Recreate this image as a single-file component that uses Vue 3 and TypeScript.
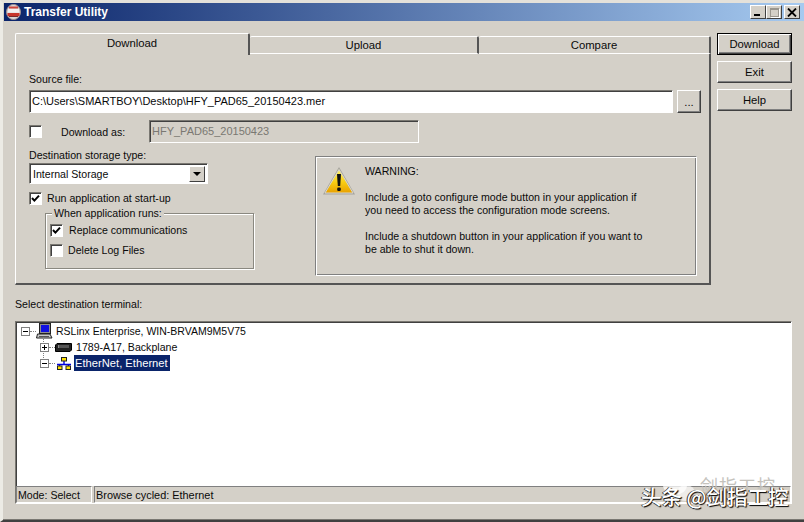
<script setup lang="ts">
const warningLines: string[] = [
  'Include a goto configure mode button in your application if',
  'you need to access the configuration mode screens.',
]
const warningLines2: string[] = [
  'Include a shutdown button in your application if you want to',
  'be able to shut it down.',
]
</script>

<template>
  <div class="window">
    <span class="edge-strip"></span>
    <div class="titlebar">
      <svg class="appicon" width="15" height="16" viewBox="0 0 15 16">
        <ellipse cx="7.5" cy="8" rx="7" ry="7.6" fill="#dcd6d6" stroke="#a09090" />
        <rect x="3" y="2.5" width="9" height="2" fill="#d0453b" />
        <rect x="2" y="5" width="11" height="3.5" fill="#f4f0f0" />
        <rect x="1.5" y="9" width="12" height="3" fill="#c8352b" />
        <rect x="3" y="12" width="9" height="1" fill="#7a2a2a" />
      </svg>
      <span class="title">Transfer Utility</span>
      <div class="caption-btns">
        <div class="cap"><span class="min"></span></div>
        <div class="cap cap-dis"><span class="max"></span></div>
        <div class="cap cap-close">
          <svg width="10" height="9" viewBox="0 0 10 9"><path d="M1 0.5 L9 8.5 M9 0.5 L1 8.5" stroke="#000" stroke-width="1.8" fill="none" /></svg>
        </div>
      </div>
    </div>

    <div class="content">
      <div class="top">
        <div class="tabs">
          <div class="tabstrip">
            <div class="tab tab-active">Download</div>
            <div class="tab tab-2">Upload</div>
            <div class="tab tab-3">Compare</div>
          </div>
          <div class="pane">
            <div class="lbl src-label">Source file:</div>
            <div class="src-row">
              <div class="input">C:\Users\SMARTBOY\Desktop\HFY_PAD65_20150423.mer</div>
              <div class="btn dots">...</div>
            </div>
            <div class="as-row">
              <span class="check"></span>
              <span class="as-label">Download as:</span>
              <div class="input input-dis">HFY_PAD65_20150423</div>
            </div>
            <div class="lower">
              <div class="lower-left">
                <div class="lbl">Destination storage type:</div>
                <div class="combo">
                  <span class="combo-text">Internal Storage</span>
                  <span class="combo-btn"><i></i></span>
                </div>
                <label class="check-row run-row">
                  <span class="check">
                    <svg width="9" height="9" viewBox="0 0 9 9"><path d="M1 4 L3.4 6.6 L8 1.6" stroke="#000" stroke-width="2" fill="none" /></svg>
                  </span>
                  Run application at start-up
                </label>
                <div class="group">
                  <span class="legend">When application runs:</span>
                  <label class="check-row">
                    <span class="check">
                      <svg width="9" height="9" viewBox="0 0 9 9"><path d="M1 4 L3.4 6.6 L8 1.6" stroke="#000" stroke-width="2" fill="none" /></svg>
                    </span>
                    Replace communications
                  </label>
                  <label class="check-row second">
                    <span class="check"></span>
                    Delete Log Files
                  </label>
                </div>
              </div>
              <div class="warning">
                <svg class="warn-icon" width="34" height="30" viewBox="0 0 34 30">
                  <defs>
                    <linearGradient id="wg" x1="0" y1="0" x2="0" y2="1">
                      <stop offset="0" stop-color="#fff36a" />
                      <stop offset="0.55" stop-color="#f8cc12" />
                      <stop offset="1" stop-color="#e8a000" />
                    </linearGradient>
                  </defs>
                  <path d="M17 1 L33 28.5 H1 Z" fill="#a5a39c" />
                  <path d="M17 3.5 L31 27 H3 Z" fill="url(#wg)" stroke="#d8d6cf" stroke-width="1" />
                  <path d="M15 8 H19 L18.2 20 H15.8 Z" fill="#111" />
                  <rect x="15.2" y="21.5" width="3.6" height="3.4" rx="1.2" fill="#111" />
                </svg>
                <div class="warn-text">
                  <p class="warn-head">WARNING:</p>
                  <p><template v-for="(l, i) in warningLines" :key="i">{{ l }}<br /></template></p>
                  <p><template v-for="(l, i) in warningLines2" :key="i">{{ l }}<br /></template></p>
                </div>
              </div>
            </div>
          </div>
        </div>
        <div class="side">
          <div class="btn side-btn default">Download</div>
          <div class="btn side-btn">Exit</div>
          <div class="btn side-btn">Help</div>
        </div>
      </div>

      <div class="lbl select-label">Select destination terminal:</div>

      <div class="treebox">
        <div class="tree">
          <div class="node">
            <span class="exp"></span><span class="dots-h"></span>
            <svg class="nicon" width="17" height="17" viewBox="0 0 17 17">
              <rect x="3.5" y="0.5" width="11" height="10" fill="#8d8d8d" stroke="#222" />
              <rect x="5" y="2" width="8" height="7" fill="#1010e0" />
              <path d="M1.5 11 H14 L16 15 H0.5 Z" fill="#c8c8c8" stroke="#222" />
              <rect x="3" y="13" width="10" height="1" fill="#555" />
            </svg>
            <span class="ntext t1">RSLinx Enterprise, WIN-BRVAM9M5V75</span>
          </div>
          <div class="node child">
            <span class="exp plus"></span><span class="dots-h"></span>
            <svg class="nicon" width="17" height="9" viewBox="0 0 17 9">
              <path d="M2 0.5 H16.5 V7 L15 8.5 H0.5 V2 Z" fill="#222" stroke="#000" />
              <rect x="3" y="2" width="11" height="3" fill="#8a8a8a" />
              <path d="M5 2 V5 M7 2 V5 M9 2 V5 M11 2 V5 M13 2 V5" stroke="#222" />
            </svg>
            <span class="ntext t2">1789-A17, Backplane</span>
          </div>
          <div class="node child">
            <span class="exp"></span><span class="dots-h"></span>
            <svg class="nicon net" width="14" height="13" viewBox="0 0 14 13">
              <path d="M7 4 V7 M0 7.5 H14 M2.5 7 V9 M11.5 7 V9" stroke="#0000e0" stroke-width="1.4" fill="none" />
              <rect x="4.5" y="0.5" width="5" height="3.5" fill="#ffe000" stroke="#222" />
              <rect x="0.5" y="9" width="4.5" height="3.5" fill="#ffe000" stroke="#222" />
              <rect x="9" y="9" width="4.5" height="3.5" fill="#ffe000" stroke="#222" />
            </svg>
            <span class="ntext selected">EtherNet, Ethernet</span>
          </div>
          <span class="vline"></span>
        </div>
        <div class="status">
          <div class="st st1">Mode: Select</div>
          <div class="st st2">Browse cycled: Ethernet</div>
        </div>
      </div>
    </div>

    <div class="watermark">
      <svg class="wm-icon" width="34" height="32" viewBox="0 0 34 32">
        <ellipse cx="13" cy="12" rx="12" ry="10" fill="#fff" opacity="0.75" />
        <ellipse cx="24" cy="20" rx="9" ry="8" fill="#fff" opacity="0.6" />
      </svg>
      <span class="wm-back">剑指工控</span>
      <span class="wm-front">头条 @剑指工控</span>
    </div>
  </div>
</template>

<style>
html, body { margin: 0; padding: 0; background: #d4d0c8; overflow: hidden; }
</style>

<style scoped>
.window {
  position: relative;
  width: 804px;
  height: 522px;
  box-sizing: border-box;
  background: #d4d0c8;
  border-top: 3px solid #e4e1da;
  border-left: 3px solid #ecebe5;
  border-bottom: 2px solid #404040;
  box-shadow: inset 0 -1px 0 #7a7872;
  font-family: "Liberation Sans", Arial, sans-serif;
  font-size: 10.6px;
  color: #0a0a0a;
  overflow: hidden;
}
.edge-strip {
  position: absolute;
  left: -3px;
  top: 29px;
  width: 2px;
  height: 38px;
  background: linear-gradient(180deg, #b0aea8 0 8px, #d05a50 8px 11px, #c8c6c0 11px 24px, #4a4a4a 24px 38px);
}
.titlebar {
  height: 18px;
  margin-left: 1px;
  display: flex;
  align-items: center;
  background: linear-gradient(90deg, #0a246a 0%, #a6caf0 100%);
}
.appicon { margin-left: 2px; flex: none; }
.title {
  margin-left: 3px;
  color: #fff;
  font-weight: 700;
  font-size: 12px;
}
.caption-btns { margin-left: auto; margin-right: 4px; display: flex; }
.cap {
  width: 16px;
  height: 14px;
  box-sizing: border-box;
  background: #d4d0c8;
  border: 1px solid;
  border-color: #fff #404040 #404040 #fff;
  position: relative;
  display: flex;
  align-items: center;
  justify-content: center;
}
.cap-close { margin-left: 2px; }
.min { position: absolute; left: 3px; bottom: 2px; width: 6px; height: 2px; background: #000; }
.max { width: 9px; height: 9px; box-sizing: border-box; border: 1px solid #9a968e; border-top-width: 2px; box-shadow: 1px 1px 0 #fff; }

.content { padding: 12px 12px 0 12px; }
.top { display: flex; align-items: flex-start; }
.tabs { width: 696px; flex: none; }
.tabstrip { display: flex; height: 21px; align-items: flex-end; position: relative; z-index: 1; }
.tab {
  box-sizing: border-box;
  height: 18px;
  text-align: center;
  line-height: 17px;
  font-size: 11.3px;
  border-top: 1px solid #fff;
  border-left: 1px solid #fff;
  border-right: 2px solid #555;
  border-bottom: 1px solid #fff;
  border-top-left-radius: 2px;
  border-top-right-radius: 2px;
}
.tab-active {
  width: 235px;
  line-height: 19px;
  border-bottom: none;
  background: #d4d0c8;
  margin-bottom: -1px;
  height: 22px;
}
.tab-2 { width: 229px; border-left: none; }
.tab-3 { width: 232px; border-left: none; }
.pane {
  box-sizing: border-box;
  height: 231px;
  border-left: 1px solid #fff;
  border-right: 2px solid #555;
  border-bottom: 2px solid #555;
  padding: 0 7px 0 13px;
}
.lbl { line-height: 14px; }
.src-label { padding-top: 18px; }
.src-row { display: flex; margin-top: 4px; align-items: flex-start; }
.input {
  box-sizing: border-box;
  background: #fff;
  border: 1px solid;
  border-color: #7a7872 #fff #fff #7a7872;
  box-shadow: inset 1px 1px 0 #404040;
  height: 23px;
  line-height: 20px;
  padding-left: 2px;
  white-space: nowrap;
  font-size: 11px;
  flex: none;
}
.src-row .input { width: 644px; }
.btn {
  box-sizing: border-box;
  background: #d4d0c8;
  border: 1px solid;
  border-color: #fff #404040 #404040 #fff;
  box-shadow: inset -1px -1px 0 #808080;
  text-align: center;
  font-size: 11.3px;
}
.dots { width: 24px; height: 23px; margin-left: 4px; line-height: 22px; flex: none; }
.as-row { display: flex; align-items: center; margin-top: 7px; height: 23px; }
.as-label { margin-left: 19px; width: 88px; }
.input-dis { background: #d4d0c8; color: #7a7872; width: 270px; font-size: 11px; }
.check {
  box-sizing: border-box;
  display: inline-flex;
  align-items: center;
  justify-content: center;
  width: 13px;
  height: 13px;
  flex: none;
  background: #fff;
  border: 1px solid;
  border-color: #7a7872 #fff #fff #7a7872;
  box-shadow: inset 1px 1px 0 #404040;
}
.lower { display: flex; align-items: flex-start; margin-top: 5px; }
.lower-left { width: 285px; flex: none; }
.combo {
  box-sizing: border-box;
  margin-top: 1px;
  width: 179px;
  height: 21px;
  display: flex;
  align-items: center;
  justify-content: space-between;
  background: #fff;
  border: 1px solid;
  border-color: #7a7872 #fff #fff #7a7872;
  box-shadow: inset 1px 1px 0 #404040;
  padding: 2px 2px 1px 3px;
}
.combo-btn {
  box-sizing: border-box;
  width: 16px;
  height: 16px;
  background: #d4d0c8;
  border: 1px solid;
  border-color: #fff #404040 #404040 #fff;
  display: flex;
  align-items: center;
  justify-content: center;
}
.combo-btn i { width: 0; height: 0; border: 4px solid transparent; border-top-color: #000; border-bottom: 0; }
.check-row { display: flex; align-items: center; gap: 8px; height: 16px; }
.run-row { margin-top: 6px; gap: 5px; }
.group {
  position: relative;
  box-sizing: border-box;
  margin: 7px 0 0 16px;
  width: 209px;
  height: 56px;
  border: 1px solid #8a8880;
  box-shadow: 1px 1px 0 #fff, inset 1px 1px 0 #fff;
  padding: 8px 0 0 4px;
}
.group .check-row { gap: 6px; }
.group .second { margin-top: 4px; gap: 5px; }
.legend {
  position: absolute;
  left: 6px;
  top: -7px;
  padding: 0 2px;
  background: #d4d0c8;
  line-height: 13px;
}
.warning {
  box-sizing: border-box;
  width: 382px;
  height: 120px;
  margin-top: 8px;
  margin-left: 1px;
  display: flex;
  border: 1px solid #808080;
  border-right-color: #fff;
  border-bottom-color: #fff;
  box-shadow: inset 1px 1px 0 #fff, inset -1px -1px 0 #808080;
  padding: 6px 0 0 6px;
}
.warn-icon { flex: none; margin-top: 3px; }
.warn-text { margin-left: 9px; line-height: 13px; }
.warn-text p { margin: 0 0 13px 0; }
.warn-head { line-height: 16px; margin-bottom: 12px !important; }

.side { margin-left: 6px; width: 75px; display: flex; flex-direction: column; gap: 6px; }
.side-btn { height: 22px; line-height: 20px; }
.default {
  border-color: #000;
  box-shadow: inset 1px 1px 0 #fff, inset -1px -1px 0 #404040, inset -2px -2px 0 #808080;
}

.select-label { margin-top: 12px; }
.treebox {
  box-sizing: border-box;
  margin-top: 10px;
  width: 777px;
  height: 183px;
  background: #fff;
  border: 1px solid;
  border-color: #7a7872 #fff #fff #7a7872;
  box-shadow: inset 1px 1px 0 #404040;
  display: flex;
  flex-direction: column;
}
.tree { flex: 1; padding: 1px 0 0 5px; position: relative; }
.node { display: flex; align-items: center; height: 16px; position: relative; }
.child { margin-left: 19px; }
.vline {
  position: absolute;
  left: 27px;
  top: 15px;
  height: 21px;
  border-left: 1px dotted #808080;
}
.exp {
  box-sizing: border-box;
  width: 9px;
  height: 9px;
  border: 1px solid #808080;
  flex: none;
  position: relative;
  z-index: 1;
  background:
    linear-gradient(#000, #000) center / 5px 1px no-repeat,
    #fff;
}
.exp.plus {
  background:
    linear-gradient(#000, #000) center / 5px 1px no-repeat,
    linear-gradient(#000, #000) center / 1px 5px no-repeat,
    #fff;
}
.dots-h { width: 6px; border-top: 1px dotted #808080; flex: none; }
.nicon { flex: none; }
.net { margin-left: 2px; }
.ntext { margin-left: 1px; white-space: nowrap; line-height: 16px; padding: 0 2px; }
.t1 { margin-left: 1px; font-size: 10.5px; }
.t2 { margin-left: 2px; }
.selected { background: #0a246a; color: #fff; margin-left: 3px; padding: 0 2px 0 1px; font-size: 11.2px; }
.status {
  display: flex;
  height: 17px;
  background: #d4d0c8;
  line-height: 17px;
}
.st {
  box-sizing: border-box;
  border: 1px solid;
  border-color: #808080 #fff #fff #808080;
  white-space: nowrap;
  padding-left: 1px;
}
.st1 { width: 76px; }
.st2 { flex: 1; margin-left: 2px; font-size: 10.9px; }

.watermark {
  position: absolute;
  left: 637px;
  top: 468px;
  width: 160px;
  height: 45px;
  font-family: "Noto Sans CJK SC", sans-serif;
  color: #fff;
  white-space: nowrap;
}
.wm-icon { position: absolute; left: 22px; top: 2px; }
.wm-back { position: absolute; left: 60px; top: 3px; font-size: 18px; color: #c4c2bc; letter-spacing: 1px; line-height: 22px; }
.wm-front { position: absolute; left: 1px; top: 11px; font-size: 20.5px; line-height: 28px; font-weight: 500; text-shadow: 1px 1px 1px #000, -1px 0 0 #333; }
</style>
